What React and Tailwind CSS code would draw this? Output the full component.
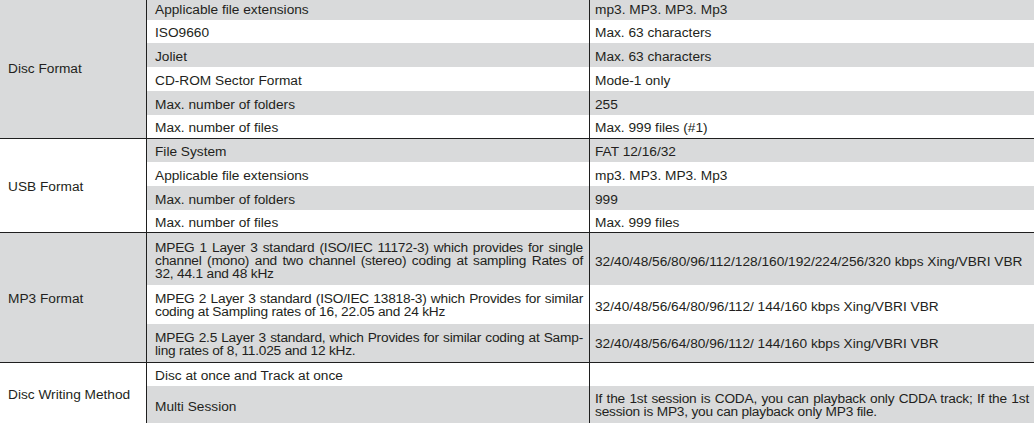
const G = 'bg-[#d9dadb]';
const W = 'bg-white';

function Lines({ lines }) {
  return (
    <div className="w-full leading-[13px] tracking-[-0.2px]">
      {lines.map((l, i) => (
        <div
          key={i}
          className={i < lines.length - 1 ? 'text-justify [text-align-last:justify] whitespace-nowrap' : 'text-left whitespace-nowrap'}
        >
          {l}
        </div>
      ))}
    </div>
  );
}

function Row({ h, bg, a, b, aCls = 'pt-[4px]', bCls = 'pt-[4px]' }) {
  return (
    <div className={`flex ${bg}`} style={{ height: h }}>
      <div className={`w-[443px] shrink-0 border-r border-[#1f1f1f] flex items-center pl-[8px] pr-[6px] ${aCls}`}>
        {a}
      </div>
      <div className={`flex-1 flex items-center pl-[5px] pr-[5px] ${bCls}`}>{b}</div>
    </div>
  );
}

function Group({ label, labelBg, rows, className = '' }) {
  return (
    <div className={`flex border-b border-[#1f1f1f] ${className}`}>
      <div className={`w-[147px] shrink-0 border-r border-[#1f1f1f] flex items-center pl-[8px] pt-[4px] ${labelBg}`}>
        {label}
      </div>
      <div className="flex-1 flex flex-col">
        {rows.map((r, i) => (
          <Row key={i} {...r} />
        ))}
      </div>
    </div>
  );
}

export default function App() {
  return (
    <div
      className="w-[1034px] h-[423px] overflow-hidden bg-white text-[#231f20] text-[13.7px]"
      style={{ fontFamily: '"Liberation Sans", Arial, sans-serif' }}
    >
      <div className="-mt-[3px]">
        <Group
          label="Disc Format"
          labelBg={G}
          rows={[
            { h: 23, bg: G, a: 'Applicable file extensions', b: 'mp3. MP3. MP3. Mp3' },
            { h: 23, bg: W, a: 'ISO9660', b: 'Max. 63 characters' },
            { h: 24, bg: G, a: 'Joliet', b: 'Max. 63 characters' },
            { h: 24, bg: W, a: 'CD-ROM Sector Format', b: 'Mode-1 only' },
            { h: 24, bg: G, a: 'Max. number of folders', b: '255' },
            { h: 23, bg: W, a: 'Max. number of files', b: 'Max. 999 files (#1)' },
          ]}
        />
        <Group
          label="USB Format"
          labelBg={W}
          rows={[
            { h: 23, bg: G, a: 'File System', b: 'FAT 12/16/32' },
            { h: 24, bg: W, a: 'Applicable file extensions', b: 'mp3. MP3. MP3. Mp3' },
            { h: 24, bg: G, a: 'Max. number of folders', b: '999' },
            { h: 22, bg: W, a: 'Max. number of files', b: 'Max. 999 files' },
          ]}
        />
        <Group
          label="MP3 Format"
          labelBg={G}
          rows={[
            {
              h: 52,
              bg: G,
              aCls: 'pt-[2px]',
              bCls: 'pt-[7px]',
              a: (
                <Lines
                  lines={[
                    'MPEG 1 Layer 3 standard (ISO/IEC 11172-3) which provides for single',
                    'channel (mono) and two channel (stereo) coding at sampling Rates of',
                    '32, 44.1 and 48 kHz',
                  ]}
                />
              ),
              b: '32/40/48/56/80/96/112/128/160/192/224/256/320 kbps Xing/VBRI VBR',
            },
            {
              h: 39,
              bg: W,
              aCls: 'pt-[1px]',
              bCls: 'pt-[5px]',
              a: (
                <Lines
                  lines={[
                    'MPEG 2 Layer 3 standard (ISO/IEC 13818-3) which Provides for similar',
                    'coding at Sampling rates of 16, 22.05 and 24 kHz',
                  ]}
                />
              ),
              b: '32/40/48/56/64/80/96/112/ 144/160 kbps Xing/VBRI VBR',
            },
            {
              h: 38,
              bg: G,
              aCls: 'pt-[1px]',
              bCls: 'pt-[2px]',
              a: (
                <Lines
                  lines={[
                    'MPEG 2.5 Layer 3 standard, which Provides for similar coding at Samp-',
                    'ling rates of 8, 11.025 and 12 kHz.',
                  ]}
                />
              ),
              b: '32/40/48/56/64/80/96/112/ 144/160 kbps Xing/VBRI VBR',
            },
          ]}
        />
        <Group
          label="Disc Writing Method"
          labelBg={W}
          className="border-b-0"
          rows={[
            { h: 23, bg: W, a: 'Disc at once and Track at once', b: '' },
            {
              h: 38,
              bg: G,
              bCls: 'pt-[0px]',
              a: 'Multi Session',
              b: (
                <Lines
                  lines={[
                    'If the 1st session is CODA, you can playback only CDDA track; If the 1st',
                    'session is MP3, you can playback only MP3 file.',
                  ]}
                />
              ),
            },
          ]}
        />
      </div>
    </div>
  );
}
